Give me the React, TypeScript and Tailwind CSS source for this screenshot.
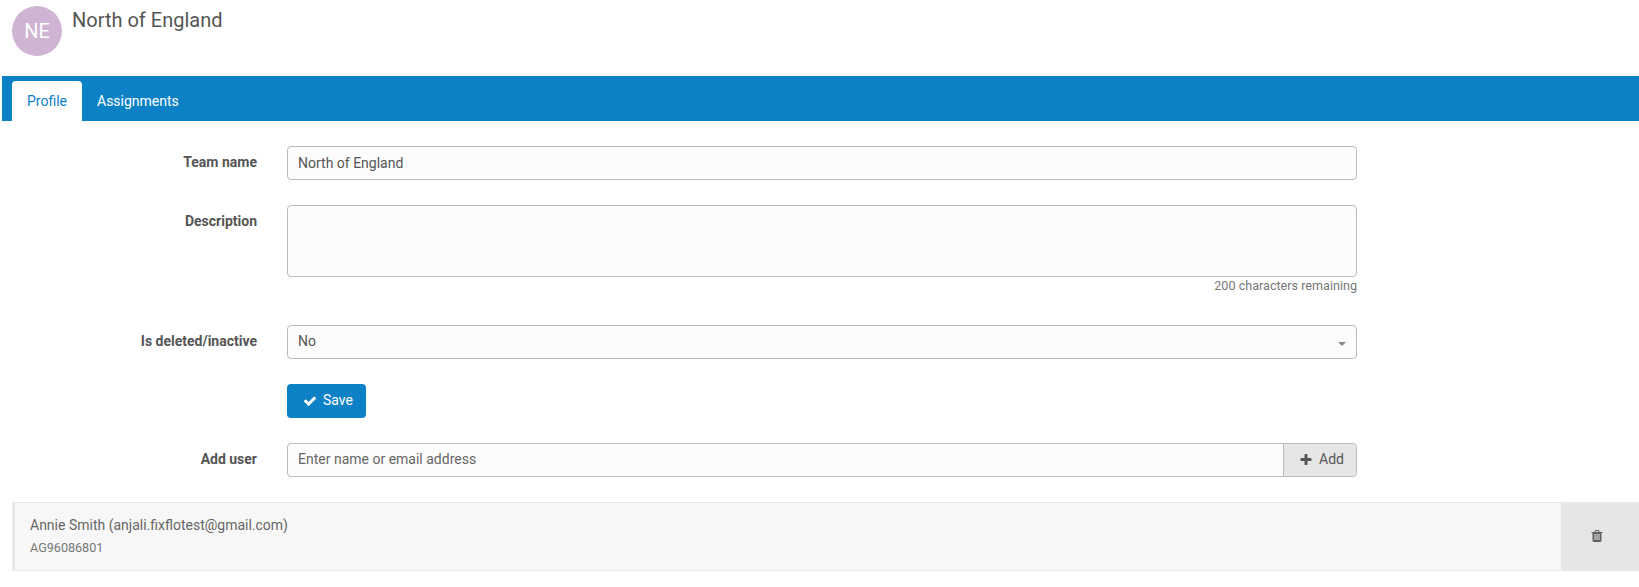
function Field({
  label,
  children,
  className = "",
}: {
  label?: string;
  children: React.ReactNode;
  className?: string;
}) {
  return (
    <div className={`flex ${className}`}>
      <label className="w-[257px] shrink-0 pt-[6px] text-right text-[14px] leading-5 font-bold text-[#555]">
        {label}
      </label>
      <div className="ml-[30px] w-[1070px]">{children}</div>
    </div>
  );
}

function CheckIcon() {
  return (
    <svg width="14" height="14" viewBox="0 0 1792 1792" fill="currentColor">
      <path d="M1671 566q0 40-28 68l-724 724-136 136q-28 28-68 28t-68-28l-136-136-362-362q-28-28-28-68t28-68l136-136q28-28 68-28t68 28l294 295 656-657q28-28 68-28t68 28l136 136q28 28 28 68z" />
    </svg>
  );
}

function PlusIcon() {
  return (
    <svg width="14" height="14" viewBox="0 0 1792 1792" fill="currentColor">
      <path d="M1600 736v192q0 40-28 68t-68 28h-416v416q0 40-28 68t-68 28h-192q-40 0-68-28t-28-68v-416h-416q-40 0-68-28t-28-68v-192q0-40 28-68t68-28h416v-416q0-40 28-68t68-28h192q40 0 68 28t28 68v416h416q40 0 68 28t28 68z" />
    </svg>
  );
}

function TrashIcon() {
  return (
    <svg width="14" height="14" viewBox="0 0 1792 1792" fill="#5f5f5f">
      <path d="M704 1376v-704q0-14-9-23t-23-9h-64q-14 0-23 9t-9 23v704q0 14 9 23t23 9h64q14 0 23-9t9-23zm256 0v-704q0-14-9-23t-23-9h-64q-14 0-23 9t-9 23v704q0 14 9 23t23 9h64q14 0 23-9t9-23zm256 0v-704q0-14-9-23t-23-9h-64q-14 0-23 9t-9 23v704q0 14 9 23t23 9h64q14 0 23-9t9-23zm-544-992h448l-48-117q-7-9-17-11h-317q-10 2-17 11zm928 32v64q0 14-9 23t-23 9h-96v948q0 83-47 143.5t-113 60.5h-832q-66 0-113-58.5t-47-141.5v-952h-96q-14 0-23-9t-9-23v-64q0-14 9-23t23-9h309l70-167q15-37 54-63t79-26h320q40 0 79 26t54 63l70 167h309q14 0 23 9t9 23z" />
    </svg>
  );
}

export default function App() {
  return (
    <div className="h-[587px] w-[1639px] overflow-hidden bg-white font-['Roboto',sans-serif] text-[14px] text-[#555]">
      <header className="flex h-[76px] pt-[6px] pl-[12px]">
        <div className="flex size-[50px] items-center justify-center rounded-full bg-[#cfb5d3] text-[20px] text-white">
          NE
        </div>
        <h1 className="ml-[10px] text-[20px] leading-[28px] font-normal text-[#555]">
          North of England
        </h1>
      </header>

      <nav className="ml-[2px] flex h-[45px] items-end bg-[#0d81c6] pl-[10px]">
        <div className="flex h-[40px] w-[70px] items-center justify-center rounded-t-[4px] bg-white text-[#0d81c6]">
          Profile
        </div>
        <div className="flex h-[40px] items-center px-[15px] text-white">
          Assignments
        </div>
      </nav>

      <form className="pt-[25px]">
        <Field label="Team name">
          <input
            readOnly
            value="North of England"
            className="h-[34px] w-full rounded-[4px] border border-[#bbb] bg-[#fcfcfc] px-[10px] text-[14px] text-[#555] outline-none"
          />
        </Field>

        <Field label="Description" className="mt-[25px]">
          <textarea
            readOnly
            className="block h-[72px] w-full resize-none rounded-[4px] border border-[#bbb] bg-[#fcfcfc] px-[10px] outline-none"
          />
          <div className="mt-[1px] text-right text-[12.6px] leading-[16px] text-[#777]">
            200 characters remaining
          </div>
        </Field>

        <Field label="Is deleted/inactive" className="mt-[31px]">
          <div className="relative flex h-[34px] items-center rounded-[4px] border border-[#bbb] bg-[#fcfcfc] px-[10px] pb-[1px]">
            No
            <span className="absolute top-[16px] right-[10px] h-0 w-0 border-x-[4px] border-t-[4px] border-x-transparent border-t-[#888]" />
          </div>
        </Field>

        <Field className="mt-[25px]">
          <button
            type="button"
            className="flex h-[34px] w-[79px] items-center gap-[6px] rounded-[4px] bg-[#0d81c6] pb-[1px] pl-[16px] text-white"
          >
            <CheckIcon />
            Save
          </button>
        </Field>

        <Field label="Add user" className="mt-[25px]">
          <div className="flex h-[34px] rounded-[4px] border border-[#bbb] bg-[#fcfcfc]">
            <input
              readOnly
              placeholder="Enter name or email address"
              className="min-w-0 flex-1 bg-transparent px-[10px] pb-[2px] text-[14px] outline-none placeholder:text-[#666]"
            />
            <div className="flex w-[73px] items-center gap-[6px] rounded-r-[4px] border-l border-[#bbb] bg-[#e6e6e6] pb-[1px] pl-[15px]">
              <PlusIcon />
              Add
            </div>
          </div>
        </Field>
      </form>

      <section className="mt-[25px] ml-[12px] flex h-[69px] border-y border-r-0 border-l-[3px] border-[#e8e8e8] bg-[#f7f7f7]">
        <div className="flex-1 pt-[12px] pl-[15px]">
          <div className="leading-5 text-[#666]">
            Annie Smith (anjali.fixflotest@gmail.com)
          </div>
          <div className="mt-[5px] text-[12.6px] leading-4 text-[#777]">
            AG96086801
          </div>
        </div>
        <div className="flex w-[78px] items-center justify-center bg-[#e6e6e6] pr-[6px] pb-[2px]">
          <TrashIcon />
        </div>
      </section>
    </div>
  );
}
